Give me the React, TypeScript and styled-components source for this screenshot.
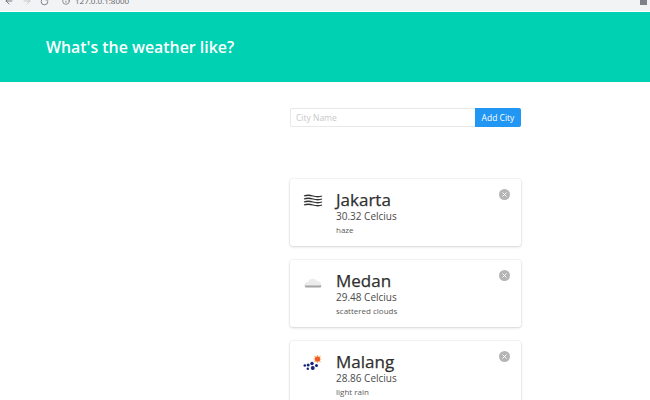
import React from "react";
import styled, { createGlobalStyle } from "styled-components";
import { ArrowLeft, ArrowRight, RotateCw, Info, X } from "lucide-react";

const GlobalStyle = createGlobalStyle`
  html, body {
    margin: 0;
    padding: 0;
    width: 650px;
    height: 400px;
    overflow: hidden;
    background: #fff;
    font-family: "Open Sans", "Noto Sans", sans-serif;
  }
  * { box-sizing: border-box; }
`;

const cities = [
  { name: "Jakarta", temp: "30.32 Celcius", desc: "haze", icon: "haze" },
  { name: "Medan", temp: "29.48 Celcius", desc: "scattered clouds", icon: "cloud" },
  { name: "Malang", temp: "28.86 Celcius", desc: "light rain", icon: "rain" },
];

const HazeIcon = () => (
  <svg width="20" height="14" viewBox="0 0 20 14" fill="none" stroke="#333" strokeWidth="1.300">
    <path d="M1 2c3-1.200 5-1.200 9 0s6 1.200 9 0" />
    <path d="M1 5c3-1.200 5-1.200 9 0s6 1.200 9 0" />
    <path d="M1 8c3-1.200 5-1.200 9 0s6 1.200 9 0" />
    <path d="M1 11c3-1.200 5-1.200 9 0s6 1.200 9 0" />
  </svg>
);

const CloudIcon = () => (
  <svg width="20" height="14" viewBox="0 0 20 14">
    <path d="M2 11c-1.500-2.500 1-4.500 3-4 1-3.500 7-4.500 9-.8 2.500-.5 5 2 4 4.800z" fill="#ececec" />
    <path d="M1.500 10.500h17l-.8 2H2.500z" fill="#a4a4a4" />
  </svg>
);

const RainIcon = () => (
  <svg width="20" height="16" viewBox="0 0 20 16">
    <path d="M14.500 0v8M10.500 4h8M11.500 1l6 6M17.500 1l-6 6" stroke="#f6b26b" strokeWidth="1.200" />
    <circle cx="14.500" cy="4" r="2.600" fill="#ef5a28" />
    <g fill="#14247a">
      <circle cx="1.800" cy="10.500" r="1.300" />
      <circle cx="5.200" cy="10" r="1.500" />
      <circle cx="9" cy="8.500" r="1.700" />
      <circle cx="4.800" cy="13.800" r="1.200" />
      <circle cx="9.800" cy="13" r="1.900" />
      <circle cx="13.500" cy="10.500" r="1.500" />
    </g>
  </svg>
);

const icons: Record<string, React.ReactNode> = {
  haze: <HazeIcon />,
  cloud: <CloudIcon />,
  rain: <RainIcon />,
};

const App: React.FC = () => {
  return (
    <Page>
      <GlobalStyle />
      <BrowserBar>
        <NavIcons>
          <ArrowLeft size={10} />
          <Faded><ArrowRight size={10} /></Faded>
          <RotateCw size={9} />
        </NavIcons>
        <Address>
          <Info size={8} />
          <span>127.0.0.1:8000</span>
        </Address>
        <Extension />
      </BrowserBar>

      <Hero>
        <Title>What's the weather like?</Title>
      </Hero>

      <Main>
        <AddForm>
          <CityInput placeholder="City Name" readOnly />
          <AddButton>Add City</AddButton>
        </AddForm>

        <CardList>
          {cities.map((city) => (
            <Card key={city.name}>
              <IconSlot>{icons[city.icon]}</IconSlot>
              <CardText>
                <CityName>{city.name}</CityName>
                <Temp>{city.temp}</Temp>
                <Desc>{city.desc}</Desc>
              </CardText>
              <DeleteButton>
                <X size={7} strokeWidth={3} color="#fff" />
              </DeleteButton>
            </Card>
          ))}
        </CardList>
      </Main>
    </Page>
  );
};

/* ================== STYLED COMPONENTS ================== */

const Page = styled.div`
  width: 650px;
  height: 400px;
  overflow: hidden;
`;

const BrowserBar = styled.div`
  height: 11px;
  background: #f1f3f4;
  display: flex;
  align-items: flex-start;
  overflow: hidden;
  padding: 0 3px 0 4px;
  color: #5f6368;
`;

const NavIcons = styled.div`
  display: flex;
  gap: 8px;
  align-items: center;
  width: 49px;
  margin-top: -4px;
`;

const Faded = styled.span`
  display: flex;
  color: #bcc0c4;
`;

const Address = styled.div`
  display: flex;
  align-items: center;
  gap: 5px;
  margin-left: 9px;
  margin-top: -4px;
  font-size: 8px;
  line-height: 10px;
  color: #5f6368;
`;

const Extension = styled.div`
  margin-left: auto;
  width: 7px;
  height: 5px;
  background: #7d8288;
`;

const Hero = styled.header`
  margin-top: 1px;
  height: 70px;
  background: #00d1b2;
  display: flex;
  align-items: center;
  padding-left: 46px;
`;

const Title = styled.h1`
  margin: 0;
  font-size: 15.900px;
  font-weight: 600;
  color: #fff;
  line-height: 22px;
`;

const Main = styled.main`
  width: 231px;
  margin-left: 290px;
  padding-top: 26px;
`;

const AddForm = styled.div`
  display: flex;
  height: 19px;
`;

const CityInput = styled.input`
  flex: 1;
  min-width: 0;
  height: 19px;
  border: 1px solid #e8e8e8;
  border-right: 0;
  border-radius: 2px 0 0 2px;
  padding: 0 5px;
  font-family: inherit;
  font-size: 8.500px;
  outline: none;
  &::placeholder {
    color: #c8c8c8;
  }
`;

const AddButton = styled.button`
  width: 46px;
  height: 19px;
  border: 0;
  padding: 0;
  border-radius: 0 2px 2px 0;
  background: #2196f3;
  color: #fff;
  font-family: inherit;
  font-size: 8.500px;
`;

const CardList = styled.div`
  margin-top: 52px;
  display: flex;
  flex-direction: column;
  gap: 14px;
`;

const Card = styled.div`
  position: relative;
  height: 67px;
  background: #fff;
  border-radius: 3px;
  box-shadow: 0 1px 3px rgba(10, 10, 10, 0.14), 0 0 0 1px rgba(10, 10, 10, 0.03);
  display: flex;
  padding: 10px 0 0 13px;
`;

const IconSlot = styled.div`
  width: 33px;
  height: 24px;
  display: flex;
  align-items: center;
`;

const CardText = styled.div`
  display: flex;
  flex-direction: column;
  color: #4a4a4a;
`;

const CityName = styled.div`
  font-size: 17px;
  font-weight: 500;
  line-height: 21px;
  color: #2f2f2f;
  -webkit-text-stroke: 0.250px #2f2f2f;
`;

const Temp = styled.div`
  font-size: 10px;
  line-height: 13px;
`;

const Desc = styled.div`
  font-size: 8px;
  line-height: 13px;
  color: #5a5a5a;
`;

const DeleteButton = styled.div`
  position: absolute;
  top: 10px;
  right: 11px;
  width: 11px;
  height: 11px;
  border-radius: 50%;
  background: #b5b5b5;
  display: flex;
  align-items: center;
  justify-content: center;
`;

export default App;
